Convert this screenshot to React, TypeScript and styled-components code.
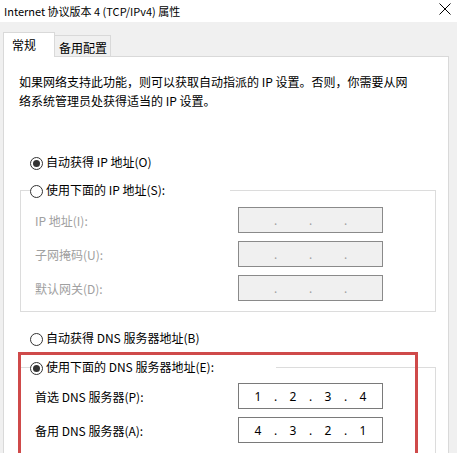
import React from 'react'
import styled, { createGlobalStyle } from 'styled-components'

const GlobalStyle = createGlobalStyle`
  html, body {
    margin: 0;
    padding: 0;
    background: #f0f0f0;
  }
  body {
    font-family: "Noto Sans CJK SC", "Noto Sans", sans-serif;
    font-size: 12px;
    color: #000;
  }
`

const Window = styled.div`
  width: 457px;
  height: 453px;
  overflow: hidden;
  background: #f0f0f0;
`

const TitleBar = styled.div`
  height: 22px;
  background: #fff;
  display: flex;
  align-items: center;
  justify-content: space-between;
  padding: 0 6px 1px 4px;
  box-sizing: border-box;
`

const Title = styled.div`
  font-size: 11px;
  line-height: 16px;
  white-space: nowrap;
`

const CloseButton = styled.div`
  display: flex;
  align-self: flex-start;
  margin-top: 3px;
`

const Body = styled.div`
  padding: 10px 8px 0 3px;
`

const Tabs = styled.div`
  display: flex;
  align-items: flex-end;
  height: 24px;
`

const Tab = styled.div<{ $active?: boolean }>`
  box-sizing: border-box;
  border: 1px solid #d9d9d9;
  border-bottom: none;
  line-height: 16px;
  white-space: nowrap;
  ${({ $active }) =>
    $active
      ? `
    position: relative;
    z-index: 1;
    width: 52px;
    height: 25px;
    margin-bottom: -1px;
    padding: 4px 0 0 8px;
    background: #fff;
  `
      : `
    width: 56px;
    height: 21px;
    border-left: none;
    padding: 4px 0 0 4px;
    background: #f0f0f0;
  `}
`

const Panel = styled.div`
  position: relative;
  height: 420px;
  border: 1px solid #d9d9d9;
  background: #fff;
  padding-top: 15px;
  box-sizing: border-box;
`

const Intro = styled.p`
  margin: 0 0 44px;
  padding-left: 15px;
  line-height: 19px;
  white-space: nowrap;
`

const RadioRow = styled.label<{ $muted?: boolean }>`
  display: flex;
  align-items: center;
  height: 16px;
  line-height: 16px;
  gap: 3px;
  white-space: nowrap;
  color: ${({ $muted }) => ($muted ? '#a0a0a0' : '#000')};
`

const StandaloneRadio = styled(RadioRow)`
  padding-left: 26px;
`

const RadioCircle = styled.span<{ $checked?: boolean }>`
  box-sizing: border-box;
  width: 13px;
  height: 13px;
  margin-top: 2px;
  border: 1px solid #333;
  border-radius: 50%;
  background: #fff;
  display: flex;
  align-items: center;
  justify-content: center;
  flex-shrink: 0;

  &::after {
    content: '';
    width: 7px;
    height: 7px;
    border-radius: 50%;
    background: ${({ $checked }) => ($checked ? '#333' : 'transparent')};
  }
`

const Group = styled.div<{ $top: number }>`
  margin: ${({ $top }) => $top}px 12px 0 16px;
  border: 1px solid #dcdcdc;
  padding-bottom: 10px;
`

const GroupHead = styled(RadioRow)<{ $width: number }>`
  width: ${({ $width }) => $width}px;
  margin: -9px 0 0 9px;
  background: #fff;
`

const Fields = styled.div<{ $top: number }>`
  display: grid;
  grid-template-columns: 203px 145px;
  row-gap: 8px;
  margin-top: ${({ $top }) => $top}px;
  padding-left: 14px;
  align-items: center;
`

const FieldLabel = styled.span<{ $muted?: boolean }>`
  color: ${({ $muted }) => ($muted ? '#a0a0a0' : '#000')};
  white-space: nowrap;
`

const IpBox = styled.div<{ $disabled?: boolean }>`
  box-sizing: border-box;
  height: 26px;
  border: 1px solid ${({ $disabled }) => ($disabled ? '#8a8a8a' : '#7a7a7a')};
  background: ${({ $disabled }) => ($disabled ? '#f0f0f0' : '#fff')};
  display: flex;
  align-items: center;
  padding-left: 7px;
  font-family: "Noto Sans", "Noto Sans CJK SC", sans-serif;
  font-size: 12px;
  color: ${({ $disabled }) => ($disabled ? '#a0a0a0' : '#000')};
`

const Octet = styled.span`
  width: 24px;
  text-align: center;
`

const Dot = styled.span`
  width: 11px;
  text-align: center;
`

const SecondSpacer = styled.div`
  height: 18px;
`

// red annotation drawn over the DNS group
const Marker = styled.div`
  position: absolute;
  left: 14px;
  top: 295px;
  width: 400px;
  height: 200px;
  border: 3px solid #cf4a4a;
  box-sizing: border-box;
  pointer-events: none;
`

const IpField = ({ value, disabled }: { value?: string[]; disabled?: boolean }) => (
  <IpBox $disabled={disabled}>
    {[0, 1, 2, 3].map((i) => (
      <React.Fragment key={i}>
        <Octet>{value ? value[i] : ''}</Octet>
        {i < 3 && <Dot>.</Dot>}
      </React.Fragment>
    ))}
  </IpBox>
)

const CloseIcon = () => (
  <svg width="12" height="12" viewBox="0 0 12 12">
    <path d="M0.5 0.5 L11.5 11.5 M11.5 0.5 L0.5 11.5" stroke="#000" strokeWidth="1" fill="none" />
  </svg>
)

export default function App() {
  return (
    <Window>
      <GlobalStyle />
      <TitleBar>
        <Title>Internet 协议版本 4 (TCP/IPv4) 属性</Title>
        <CloseButton>
          <CloseIcon />
        </CloseButton>
      </TitleBar>
      <Body>
        <Tabs>
          <Tab $active>常规</Tab>
          <Tab>备用配置</Tab>
        </Tabs>
        <Panel>
          <Intro>
            如果网络支持此功能，则可以获取自动指派的 IP 设置。否则，你需要从网
            <br />
            络系统管理员处获得适当的 IP 设置。
          </Intro>
          <StandaloneRadio>
            <RadioCircle $checked />
            自动获得 IP 地址(O)
          </StandaloneRadio>

          <Group $top={20}>
            <GroupHead $width={200}>
              <RadioCircle />
              使用下面的 IP 地址(S):
            </GroupHead>
            <Fields $top={9}>
              <FieldLabel $muted>IP 地址(I):</FieldLabel>
              <IpField disabled />
              <FieldLabel $muted>子网掩码(U):</FieldLabel>
              <IpField disabled />
              <FieldLabel $muted>默认网关(D):</FieldLabel>
              <IpField disabled />
            </Fields>
          </Group>

          <SecondSpacer />
          <StandaloneRadio>
            <RadioCircle />
            自动获得 DNS 服务器地址(B)
          </StandaloneRadio>

          <Group $top={21}>
            <GroupHead $width={246}>
              <RadioCircle $checked />
              使用下面的 DNS 服务器地址(E):
            </GroupHead>
            <Fields $top={8}>
              <FieldLabel>首选 DNS 服务器(P):</FieldLabel>
              <IpField value={['1', '2', '3', '4']} />
              <FieldLabel>备用 DNS 服务器(A):</FieldLabel>
              <IpField value={['4', '3', '2', '1']} />
            </Fields>
          </Group>
          <Marker />
        </Panel>
      </Body>
    </Window>
  )
}
